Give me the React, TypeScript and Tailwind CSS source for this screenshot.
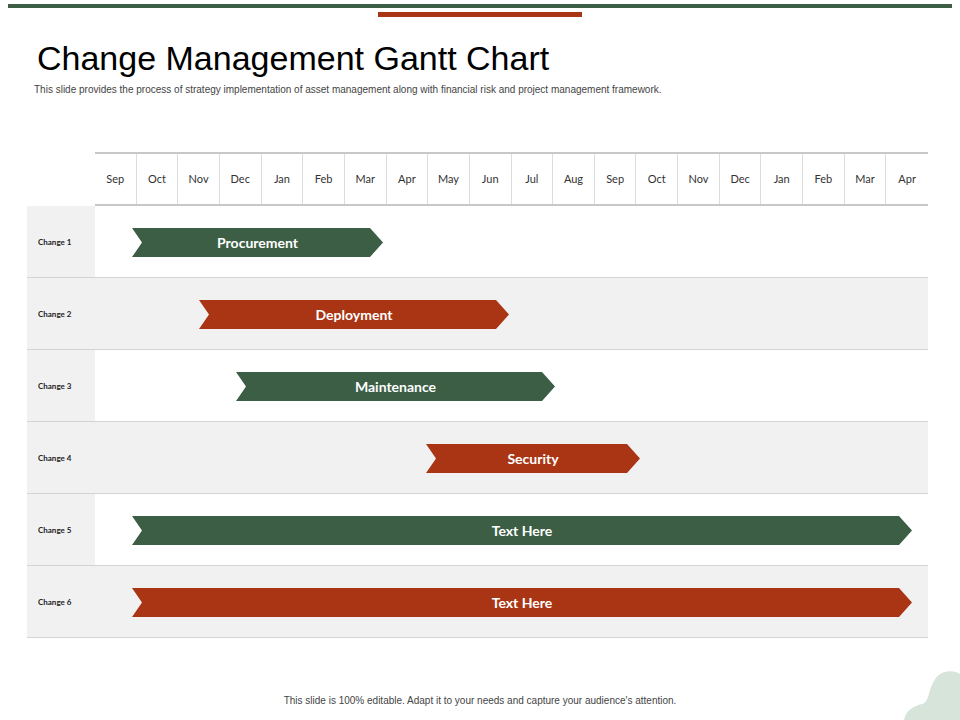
import React from "react";

const months = ["Sep","Oct","Nov","Dec","Jan","Feb","Mar","Apr","May","Jun","Jul","Aug","Sep","Oct","Nov","Dec","Jan","Feb","Mar","Apr"];
const rows = [
  { label: "Change 1", text: "Procurement", l: 132, r: 383, c: "#3b5e45", gray: false },
  { label: "Change 2", text: "Deployment", l: 199, r: 509, c: "#a93514", gray: true },
  { label: "Change 3", text: "Maintenance", l: 236, r: 555, c: "#3b5e45", gray: false },
  { label: "Change 4", text: "Security", l: 426, r: 640, c: "#a93514", gray: true },
  { label: "Change 5", text: "Text Here", l: 132, r: 912, c: "#3b5e45", gray: false },
  { label: "Change 6", text: "Text Here", l: 132, r: 912, c: "#a93514", gray: true },
];

export default function App() {
  return (
    <div className="w-[960px] h-[720px] bg-white relative overflow-hidden" style={{ fontFamily: "Lato, 'Liberation Sans', sans-serif" }}>
      <div className="mx-[8px] mt-[4px] h-[4px] bg-[#3b5e45]" />
      <div className="ml-[378px] mt-[4px] w-[204px] h-[5px] bg-[#a93514]" />
      <h1 className="ml-[37px] mt-[21px] text-[34px] leading-[40px] text-black" style={{ fontFamily: "'Liberation Sans', sans-serif", fontWeight: 400 }}>Change Management Gantt Chart</h1>
      <p className="ml-[34px] mt-[4px] text-[10px] text-[#444]" style={{ fontFamily: "'Liberation Sans', sans-serif" }}>This slide provides the process of strategy implementation of asset management along with financial risk and project management framework.</p>
      <div className="ml-[27px] mt-[55px] w-[901px]">
        <div className="flex h-[54px]">
          <div className="w-[68px]" />
          <div className="flex-1 grid grid-cols-20 border-t-2 border-b-2 border-[#c8c8c8]">
            {months.map((m, i) => (
              <div key={i} className={`flex items-center justify-center text-[11px] text-[#333] ${i < 19 ? "border-r border-[#dcdcdc]" : ""}`}>{m}</div>
            ))}
          </div>
        </div>
        {rows.map((r, i) => (
          <div key={i} className={`flex h-[72px] border-b border-[#d4d4d4] ${r.gray ? "bg-[#f1f1f1]" : ""}`}>
            <div className="w-[68px] bg-[#f1f1f1] flex items-center pl-[11px] text-[8px] font-bold text-[#222]">{r.label.replace(" ", "  ")}</div>
            <div className="flex-1 relative">
              <div
                className="absolute top-[22px] h-[29px] flex items-center justify-center text-white text-[14px] font-bold"
                style={{ left: r.l - 95, width: r.r - r.l, background: r.c, clipPath: "polygon(0 0, calc(100% - 13px) 0, 100% 50%, calc(100% - 13px) 100%, 0 100%, 10px 50%)" }}
              >
                {r.text}
              </div>
            </div>
          </div>
        ))}
      </div>
      <p className="absolute left-0 right-0 top-[693px] text-center text-[10px] text-[#444]" style={{ fontFamily: "'Liberation Sans', sans-serif" }}>This slide is 100% editable. Adapt it to your needs and capture your audience's attention.</p>
      <svg className="absolute right-0 bottom-0" width="56" height="50" viewBox="0 0 56 50">
        <path d="M0 50 C2 40 10 36 18 34 C26 32 24 18 32 8 C38 0 50 0 56 4 L56 50 Z" fill="#d6e4da" />
      </svg>
    </div>
  );
}
